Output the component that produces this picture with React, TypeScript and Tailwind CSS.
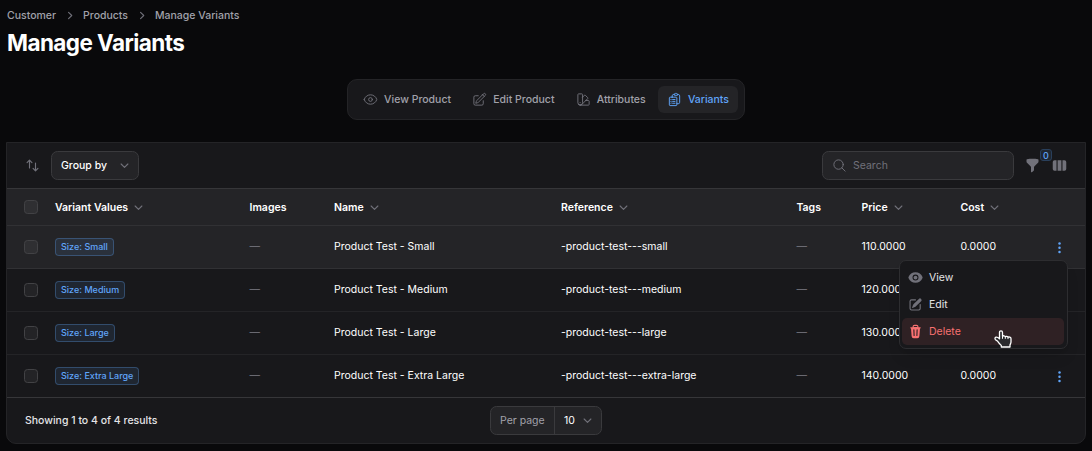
import React from "react";
import {
  HiMiniArrowsUpDown,
  HiMiniChevronRight,
  HiMiniEye,
  HiMiniFunnel,
  HiMiniPencilSquare,
  HiMiniTrash,
  HiMiniViewColumns,
  HiOutlineClipboardDocumentList,
  HiOutlineEye,
  HiOutlinePencilSquare,
  HiOutlineSwatch,
} from "react-icons/hi2";

const GRID =
  "grid grid-cols-[48px_194.5px_84.5px_227px_235.4px_65.1px_99px_1fr] items-center";

function ChevronDown() {
  return (
    <svg viewBox="0 0 20 20" className="size-[15px] shrink-0 text-[#71717a]" fill="none" stroke="currentColor" strokeWidth="1.5" strokeLinecap="round" strokeLinejoin="round">
      <path d="M5.5 8l4.5 4.5 4.5-4.5" />
    </svg>
  );
}

function Checkbox() {
  return (
    <span className="ml-[17px] block size-[14px] rounded-[3.5px] border border-[#424245] bg-[#ffffff0d]" />
  );
}

function Dots() {
  return (
    <svg viewBox="0 0 15 15" className="size-[15px] text-[#60a5fa]" fill="currentColor">
      <circle cx="7.5" cy="3.5" r="1.25" />
      <circle cx="7.5" cy="7.8" r="1.25" />
      <circle cx="7.5" cy="12.1" r="1.25" />
    </svg>
  );
}

function HandCursor() {
  return (
    <svg viewBox="0 0 18 18" className="absolute left-[93.5px] top-[68.5px] h-[18px] w-[18px]">
      <path
        d="M7 .9c.9 0 1.500.6 1.500 1.500v3.900c.6-.8 2.500-.7 2.800.4.700-.7 2.400-.4 2.700.6.900-.6 3-.2 3 1.400v3.300c0 1.300-.7 2.100-1 3v2H7.300v-1.600C5.900 14.300 4.600 12.600 3.700 11.300L1.500 9.700C.6 8.800.9 7.500 2 7.200c1.300-.2 2.500.6 3.500 1.500V2.400C5.500 1.500 6.100.9 7 .9z"
        fill="#2a2a2d"
        stroke="#fff"
        strokeWidth="1.3"
        strokeLinejoin="round"
      />
      <path d="M8.500 6.500v2.300M11.300 6.800v2M14 7.500v1.600" stroke="#fff" strokeWidth="1" fill="none" />
    </svg>
  );
}

function Header({ label, sortable }: { label: string; sortable?: boolean }) {
  return (
    <div className="flex items-center gap-[3px] font-semibold text-white">
      {label}
      {sortable && <ChevronDown />}
    </div>
  );
}

const variants = [
  { size: "Small", ref: "small", price: "110.0000" },
  { size: "Medium", ref: "medium", price: "120.0000" },
  { size: "Large", ref: "large", price: "130.0000" },
  { size: "Extra Large", ref: "extra-large", price: "140.0000" },
];

const tabs = [
  { label: "View Product", Icon: HiOutlineEye },
  { label: "Edit Product", Icon: HiOutlinePencilSquare },
  { label: "Attributes", Icon: HiOutlineSwatch },
  { label: "Variants", Icon: HiOutlineClipboardDocumentList, active: true },
];

function ActionMenu() {
  return (
    <div className="absolute left-[892px] top-[34px] z-10 h-[89px] w-[169px] rounded-[7px] border border-[#2d2d30] bg-[#18181b] py-[3px] pl-[2px] pr-[3px] text-[10.5px] leading-[15px] text-[#e4e4e7] shadow-lg">
      <div className="flex h-[27px] items-center gap-1.5 rounded-[5px] px-1.5">
        <HiMiniEye className="size-[15px] text-[#71717a]" />
        View
      </div>
      <div className="flex h-[27px] items-center gap-1.5 rounded-[5px] px-1.5">
        <HiMiniPencilSquare className="size-[15px] text-[#71717a]" />
        Edit
      </div>
      <div className="flex h-[27px] items-center gap-1.5 rounded-[5px] bg-[#2f2124] px-1.5 text-[#f87171]">
        <HiMiniTrash className="size-[15px]" />
        Delete
      </div>
      <HandCursor />
    </div>
  );
}

export default function App() {
  return (
    <div className="h-[451px] w-[1092px] overflow-hidden bg-[#09090b] px-1.5 font-['Inter',sans-serif] text-[10.5px] leading-[15px] text-white">
      <nav className="flex items-center gap-1.5 pl-px pt-2 font-medium text-[#a1a1aa]">
        <span>Customer</span>
        <HiMiniChevronRight className="size-[15px] text-[#71717a]" />
        <span>Products</span>
        <HiMiniChevronRight className="size-[15px] text-[#71717a]" />
        <span>Manage Variants</span>
      </nav>
      <h1 className="pl-px pt-1 text-[22.5px] leading-8 font-bold tracking-tight">Manage Variants</h1>

      <div className="mt-5 flex justify-center">
        <div className="flex h-[41px] w-[398px] items-center gap-[3.2px] rounded-[10px] border border-[#242427] bg-[#18181b] pl-[6.1px]">
          {tabs.map(({ label, Icon, active }) => (
            <div
              key={label}
              className={
                active
                  ? "flex h-[27px] items-center gap-1.5 rounded-[6px] bg-[#242427] px-[9px] font-medium whitespace-nowrap text-[#60a5fa]"
                  : "flex h-[27px] items-center gap-1.5 rounded-[6px] px-[9px] font-medium whitespace-nowrap text-[#a1a1aa]"
              }
            >
              <Icon className={active ? "size-[15px]" : "size-[15px] text-[#71717a]"} />
              {label}
            </div>
          ))}
        </div>
      </div>

      <section className="mt-[22px] h-[302px] w-[1080px] rounded-b-[10px] border border-[#242427] bg-[#18181b]">
        <div className="flex h-[46px] items-center border-b border-[#363639] px-[18px]">
          <HiMiniArrowsUpDown className="size-[15px] text-[#71717a]" />
          <div className="ml-[11px] flex h-[29px] w-[88px] items-center justify-between rounded-[6.5px] border border-[#3a3a3d] bg-[#242427] pl-[9px] pr-[6.5px] font-medium">
            Group by
            <ChevronDown />
          </div>
          <div className="ml-auto flex h-[29px] w-[192px] items-center rounded-[6.5px] border border-[#3a3a3d] bg-[#242427] pl-[9px] text-[#71717a]">
            <svg viewBox="0 0 24 24" className="mr-[6px] size-[15px]" fill="none" stroke="currentColor" strokeWidth="1.5" strokeLinecap="round">
              <circle cx="10.5" cy="10.5" r="7.5" />
              <path d="M21 21l-5.200-5.200" />
            </svg>
            Search
          </div>
          <div className="relative ml-[11px]">
            <HiMiniFunnel className="size-[15px] text-[#71717a]" />
            <span className="absolute -top-[9px] left-[15px] flex h-3 w-3 items-center justify-center rounded-[3px] border border-[#293f5b] bg-[#1f2631] text-[9px] leading-none font-medium text-[#60a5fa]">
              0
            </span>
          </div>
          <HiMiniViewColumns className="ml-3 size-[15px] text-[#71717a]" />
        </div>

        <div className={`${GRID} h-[37px] border-b border-[#313134] bg-[#242427]`}>
          <Checkbox />
          <Header label="Variant Values" sortable />
          <Header label="Images" />
          <Header label="Name" sortable />
          <Header label="Reference" sortable />
          <Header label="Tags" />
          <Header label="Price" sortable />
          <Header label="Cost" sortable />
        </div>

        <div>
          {variants.map((v, i) => (
            <div
              key={v.size}
              className={
                i === 0
                  ? `${GRID} relative h-[43px] border-b border-[#313134] bg-[#242427]`
                  : i === 3
                    ? `${GRID} h-[43px] border-b border-[#363639]`
                    : `${GRID} h-[43px] border-b border-[#242427]`
              }
            >
              <Checkbox />
              <div className="flex">
                <span className="flex h-[18px] items-center rounded-[4px] border border-[#60a5fa4d] bg-[#60a5fa1a] px-[5px] pb-px text-[9px] font-medium text-[#60a5fa]">
                  Size: {v.size}
                </span>
              </div>
              <span className="pb-0.5 text-[#7c7c85]">—</span>
              <span className="pb-0.5">Product Test - {v.size}</span>
              <span className="pb-0.5">-product-test---{v.ref}</span>
              <span className="pb-0.5 text-[#7c7c85]">—</span>
              <span className="pb-0.5">{v.price}</span>
              <div className="flex items-center justify-between pr-[18px]">
                <span className="pb-0.5">0.0000</span>
                <Dots />
              </div>
              {i === 0 && <ActionMenu />}
            </div>
          ))}
        </div>

        <div className="grid h-[45px] grid-cols-[1fr_auto_1fr] items-center px-[18px]">
          <span className="font-medium text-[#e4e4e7]">Showing 1 to 4 of 4 results</span>
          <div className="flex h-[29px] w-[112px] items-center rounded-[6.5px] border border-[#3a3a3d] bg-[#242427]">
            <span className="flex h-full w-[64px] items-center border-r border-[#3a3a3d] pl-[9px] text-[#a1a1aa]">
              Per page
            </span>
            <span className="flex flex-1 items-center justify-between pl-[9px] pr-[6.5px]">
              10
              <ChevronDown />
            </span>
          </div>
        </div>
      </section>
    </div>
  );
}
